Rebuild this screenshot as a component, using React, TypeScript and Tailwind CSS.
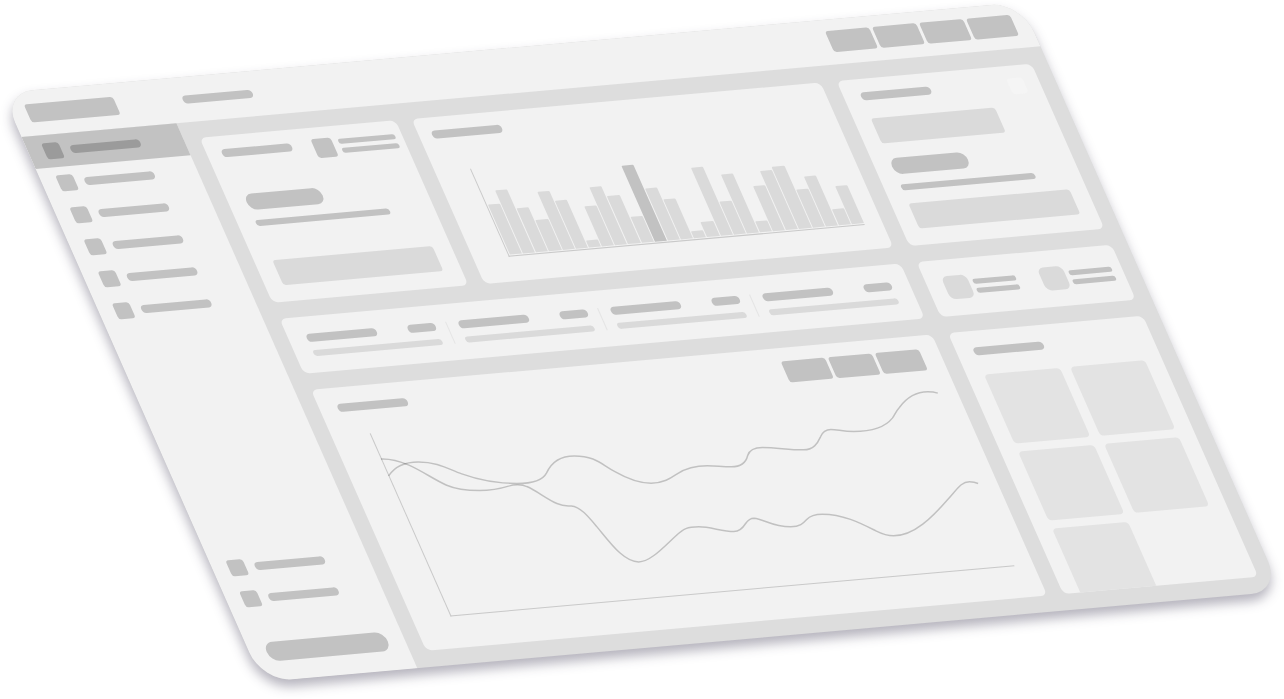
import type { ReactNode } from "react";
import clsx from "clsx";

const navItems = ["Overview", "Accounts", "Reports", "Messages", "Calendar", "Files"];
const footerItems = ["Settings", "Help"];
const headerActions = ["Search", "Alerts", "Inbox", "Profile"];
const ranges = ["Day", "Week", "Month"];

const bars = [
  50, 63, 44, 31, 58, 48, 7, 40, 58, 48, 26, 76, 52, 40, 7, 15, 68, 33, 59, 11, 45, 59, 62, 38, 50, 16, 38,
];
const highlightedBar = 11;

const upperLine =
  "M116 287C132 262 158 245 205 245C265 245 295 267 335 281C385 299 450 310 500 310C550 310 578 300 589 278C604 244 632 227 672 227C735 227 755 254 795 275C835 298 868 309 902 309C940 309 962 293 980 281C1005 265 1030 257 1070 257C1095 257 1115 260 1142 260C1172 260 1186 247 1191 226C1196 210 1208 202 1235 202C1280 202 1310 209 1358 209C1388 209 1400 190 1409 170C1415 155 1425 148 1440 148C1460 148 1475 154 1508 154C1560 154 1602 142 1624 114C1632 103 1632 97 1645 82C1665 55 1695 35 1730 35C1740 35 1750 36 1760 39";
const lowerLine =
  "M93 236C120 235 150 243 175 254C215 271 255 300 290 315C315 326 350 331 388 331C430 331 455 324 478 317C490 313 515 312 530 319C560 332 590 357 620 370C640 379 650 377 663 377C690 379 715 410 740 440C780 488 820 545 865 545C900 545 940 500 975 468C1000 445 1010 440 1045 440C1080 440 1115 454 1150 454C1165 454 1175 446 1185 430C1193 418 1198 414 1210 414C1240 417 1265 440 1320 440C1348 440 1357 430 1368 418C1378 406 1390 402 1415 402C1480 402 1535 432 1575 452C1595 462 1610 467 1628 467C1690 467 1745 410 1790 358C1820 325 1830 305 1855 305C1865 305 1872 306 1881 310";

function Card({ className, children }: { className?: string; children: ReactNode }) {
  return <section className={clsx("overflow-hidden rounded-md bg-[#f2f2f2]", className)}>{children}</section>;
}

function Title() {
  return <div className="h-2 w-[70px] shrink-0 rounded-full bg-[#c2c2c2]" />;
}

function Lines({ className }: { className: string }) {
  return (
    <div className={clsx("flex flex-col gap-1", className)}>
      <div className="h-[5px] rounded-full bg-[#c2c2c2]" />
      <div className="h-[5px] rounded-full bg-[#c2c2c2]" />
    </div>
  );
}

function NavLink({ label, active, className }: { label: string; active?: boolean; className: string }) {
  return (
    <a
      href="#"
      aria-label={label}
      className={clsx("flex items-center gap-[9px] px-4 pb-px", className, active && "bg-[#c2c2c2]")}
    >
      <span className={clsx("h-4 w-[17px] rounded-[3px]", active ? "bg-[#9b9b9b]" : "bg-[#c2c2c2]")} />
      <span className={clsx("h-2 w-[70px] rounded-full", active ? "bg-[#9b9b9b]" : "bg-[#c2c2c2]")} />
    </a>
  );
}

function ButtonRow({ labels }: { labels: string[] }) {
  return (
    <div className="flex gap-[3px]">
      {labels.map((label) => (
        <button key={label} type="button" aria-label={label} className="h-[21px] w-11 rounded-[3px] bg-[#c2c2c2]" />
      ))}
    </div>
  );
}

function Header() {
  return (
    <header className="flex h-11 items-center bg-[#f2f2f2] px-4">
      <div className="w-[155px]">
        <div className="h-[18px] w-[89px] rounded-[3px] bg-[#c2c2c2]" />
      </div>
      <Title />
      <div className="ml-auto pb-0.5">
        <ButtonRow labels={headerActions} />
      </div>
    </header>
  );
}

function Sidebar() {
  return (
    <aside className="flex w-[155px] shrink-0 flex-col bg-[#f2f2f2] pb-[19px]">
      <nav>
        {navItems.map((label, i) => (
          <NavLink key={label} label={label} active={i === 0} className="h-8" />
        ))}
      </nav>
      <div className="mt-auto">
        {footerItems.map((label) => (
          <NavLink key={label} label={label} className="h-[31px]" />
        ))}
      </div>
      <button type="button" aria-label="Sign out" className="mx-[17px] mt-[27px] h-[19px] rounded-full bg-[#c2c2c2]" />
    </aside>
  );
}

function BalanceCard() {
  return (
    <Card className="flex w-[196px] shrink-0 flex-col pt-[11px] pb-4">
      <div className="flex items-start pr-[7px] pl-[15px]">
        <div className="pt-0.5">
          <Title />
        </div>
        <div className="ml-auto h-[19px] w-5 rounded-[3px] bg-[#c2c2c2]" />
        <div className="pt-0.5 pl-[6px]">
          <Lines className="w-[57px]" />
        </div>
      </div>
      <div className="flex flex-1 flex-col px-[18px] pt-7">
        <div className="h-4 w-[76px] rounded-full bg-[#c2c2c2]" />
        <div className="mt-[10px] h-1.5 w-[134px] rounded-full bg-[#c2c2c2]" />
        <button type="button" aria-label="View balance" className="mt-auto h-[25px] w-full rounded-[3px] bg-[#dadada]" />
      </div>
    </Card>
  );
}

function BarChartCard() {
  return (
    <Card className="min-w-0 flex-1 pt-[13px] pr-[18px] pl-[13px]">
      <Title />
      <div className="mt-8 ml-[22px] flex h-[88px] items-end gap-px border-b border-l border-[#c9c9c9] pb-px pl-px">
        {bars.map((height, i) => (
          <div
            key={i}
            className={clsx("flex-1 rounded-t-[1px]", i === highlightedBar ? "bg-[#c2c2c2]" : "bg-[#dadada]")}
            style={{ height }}
          />
        ))}
      </div>
    </Card>
  );
}

function StatsCard() {
  return (
    <Card className="flex h-[55px] items-center gap-3 px-[18px]">
      {[0, 1, 2, 3].map((i) => (
        <div key={i} className="contents">
          {i > 0 && <div className="-mx-px h-[22px] w-px bg-[#e4e4e4]" />}
          <div className="flex-1">
            <div className="flex items-center justify-between">
              <Title />
              <div className="h-2 w-7 rounded-full bg-[#c2c2c2]" />
            </div>
            <div className="mt-2 h-1.5 rounded-full bg-[#dadada]" />
          </div>
        </div>
      ))}
    </Card>
  );
}

function LineChartCard() {
  return (
    <Card className="h-[261px] pt-[13px] pr-[19px]">
      <div className="flex items-start justify-between pl-[18px]">
        <div className="pt-[3px]">
          <Title />
        </div>
        <ButtonRow labels={ranges} />
      </div>
      <div className="mt-[13px] ml-[38px] h-[183px] border-b border-l border-[#c9c9c9]">
        <svg viewBox="0 0 562 182" preserveAspectRatio="none" className="block h-full w-full overflow-visible">
          <g
            transform="matrix(0.32073 0.02854 -0.14177 0.32073 2.6 -52.83)"
            fill="none"
            stroke="#000000"
            strokeOpacity="0.2"
            strokeWidth="4.5"
          >
            <path d={upperLine} />
            <path d={lowerLine} />
          </g>
        </svg>
      </div>
    </Card>
  );
}

function SummaryCard() {
  return (
    <Card className="flex h-[165px] flex-col px-[17px] pt-3 pb-4">
      <div className="flex items-start justify-between">
        <div className="pt-px">
          <Title />
        </div>
        <button type="button" aria-label="More" className="-mr-0.5 size-4 rounded bg-[#f5f5f5]" />
      </div>
      <div className="mt-[11px] h-[25px] w-[124px] rounded-[3px] bg-[#dadada]" />
      <div className="mt-[15px] h-4 w-[76px] rounded-full bg-[#c2c2c2]" />
      <div className="mt-[10px] h-1.5 w-[134px] rounded-full bg-[#c2c2c2]" />
      <button type="button" aria-label="View summary" className="mt-auto h-[25px] w-full rounded-[3px] bg-[#dadada]" />
    </Card>
  );
}

function PeopleCard() {
  return (
    <Card className="flex h-[55px] items-center justify-between pr-[10px] pl-[17px]">
      {[0, 1].map((i) => (
        <div key={i} className="flex items-center gap-1">
          <div className="h-[23px] w-[25px] rounded-md bg-[#dadada]" />
          <Lines className="w-[43px]" />
        </div>
      ))}
    </Card>
  );
}

function GalleryCard() {
  return (
    <Card className="h-[261px] px-[17px] pt-4">
      <Title />
      <div className="mt-[19px] grid grid-cols-2 gap-x-[10px] gap-y-2">
        {[0, 1, 2, 3, 4].map((i) => (
          <div key={i} className="h-[69px] rounded bg-[#e3e3e3]" />
        ))}
      </div>
    </Card>
  );
}

export default function App() {
  return (
    <main className="min-h-screen overflow-hidden bg-white pt-[93px] pl-[2px]">
      <div className="drop-shadow-[0_7px_6px_rgba(25,18,50,0.32)]">
        <div className="w-[79.5%] origin-top-left [transform:matrix(1,-0.089,0.442,1,0,0)] overflow-hidden rounded-[30px] bg-[#dddddd]">
          <Header />
          <div className="flex">
            <Sidebar />
            <div className="flex min-w-0 flex-1 gap-4 p-4">
              <div className="flex min-w-0 flex-1 flex-col gap-4">
                <div className="flex h-[165px] gap-4">
                  <BalanceCard />
                  <BarChartCard />
                </div>
                <StatsCard />
                <LineChartCard />
              </div>
              <div className="flex w-[195px] shrink-0 flex-col gap-4">
                <SummaryCard />
                <PeopleCard />
                <GalleryCard />
              </div>
            </div>
          </div>
        </div>
      </div>
    </main>
  );
}
